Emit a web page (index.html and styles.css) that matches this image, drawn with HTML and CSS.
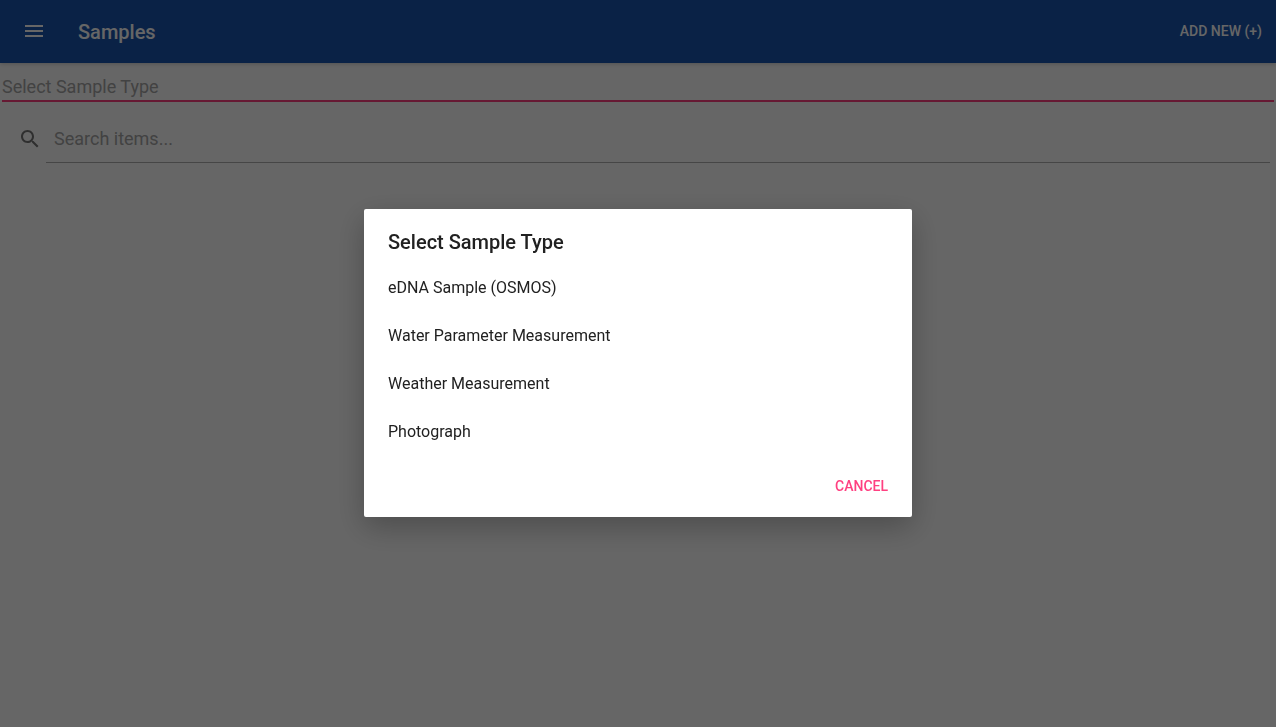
FILE: index.html
```html
<!DOCTYPE html>
<html lang="en">
<head>
<meta charset="utf-8">
<title>Samples</title>
<link rel="stylesheet" href="styles.css">
</head>
<body>
<header class="app-bar">
  <button class="menu-button" type="button" aria-label="Open menu">
    <svg viewBox="0 0 24 24" width="24" height="24"><path d="M3 18h18v-2H3v2zm0-5h18v-2H3v2zm0-7v2h18V6H3z"/></svg>
  </button>
  <h1 class="page-title">Samples</h1>
  <button class="add-button" type="button">ADD NEW (+)</button>
</header>
<main class="content">
  <input class="type-field" type="text" readonly placeholder="Select Sample Type" aria-label="Sample type">
  <div class="search-row">
    <label class="search-label" for="search" aria-label="Search">
      <svg viewBox="0 0 24 24" width="24" height="24"><path d="M15.5 14h-.79l-.28-.27C15.41 12.59 16 11.11 16 9.5 16 5.91 13.09 3 9.5 3S3 5.91 3 9.5 5.91 16 9.5 16c1.61 0 3.09-.59 4.23-1.57l.27.28v.79l5 4.99L20.49 19l-4.99-5zm-6 0C7.01 14 5 11.99 5 9.5S7.01 5 9.5 5 14 7.01 14 9.5 11.99 14 9.5 14z"/></svg>
    </label>
    <input class="search-field" id="search" type="text" placeholder="Search items...">
  </div>
</main>
<div class="backdrop">
  <section class="dialog" role="dialog" aria-modal="true" aria-labelledby="dialog-title">
    <h2 class="dialog-title" id="dialog-title">Select Sample Type</h2>
    <div class="options">
      <button class="option" type="button">eDNA Sample (OSMOS)</button>
      <button class="option" type="button">Water Parameter Measurement</button>
      <button class="option" type="button">Weather Measurement</button>
      <button class="option" type="button">Photograph</button>
    </div>
    <div class="actions"><button class="cancel-button" type="button">CANCEL</button></div>
  </section>
</div>
</body>
</html>
```
FILE: styles.css
```css
* { box-sizing: border-box; }
body { margin: 0; min-height: 100vh; background: #fff; font-family: Roboto, sans-serif; }
button, input { font: inherit; border: 0; border-radius: 0; background: none; outline: 0; }
button { cursor: pointer; }
h1, h2 { margin: 0; font-size: 20px; line-height: 24px; font-weight: 500; }
svg { display: block; fill: currentColor; }
.app-bar { display: flex; align-items: center; height: 63px; padding: 0 14px 1px 22px; background: #1955b0; color: #fff; box-shadow: 0 1px 4px rgba(0, 0, 0, .2); }
.menu-button { padding: 0; color: inherit; }
.page-title { flex: 1; padding-top: 2px; margin-left: 32px; }
.add-button { padding: 0; color: inherit; font-size: 14px; line-height: 20px; font-weight: 500; }
.content { padding: 11px 2px; }
.type-field { display: block; width: 100%; height: 28px; padding: 0 0 2px; font-size: 18px; border-bottom: 2px solid #ff4081; }
.type-field::placeholder, .search-field::placeholder { color: #a6a6a6; opacity: 1; }
.search-row { display: flex; padding: 13px 4px 0 16px; }
.search-label { padding-top: 12px; color: #757575; }
.search-field { flex: 1; min-width: 0; height: 48px; margin-left: 4px; padding: 0 8px; font-size: 18px; border-bottom: 1px solid #b0b0b0; }
.backdrop { position: fixed; inset: 0; display: flex; align-items: center; justify-content: center; padding: 16px 16px 17px; background: rgba(0, 0, 0, .6); }
.dialog { width: 100%; max-width: 548px; padding-top: 21px; border-radius: 2px; background: #fff; color: #212121; box-shadow: 0 10px 30px rgba(0, 0, 0, .26); }
.dialog-title { padding: 0 24px; }
.options { display: flex; flex-direction: column; padding-top: 10px; }
.option { height: 48px; padding: 0 24px; color: inherit; font-size: 16px; line-height: 24px; text-align: left; }
.actions { display: flex; justify-content: flex-end; padding: 12px 16px 13px; }
.cancel-button { height: 36px; padding: 0 8px; color: #ff4081; font-size: 14px; font-weight: 500; }
```
